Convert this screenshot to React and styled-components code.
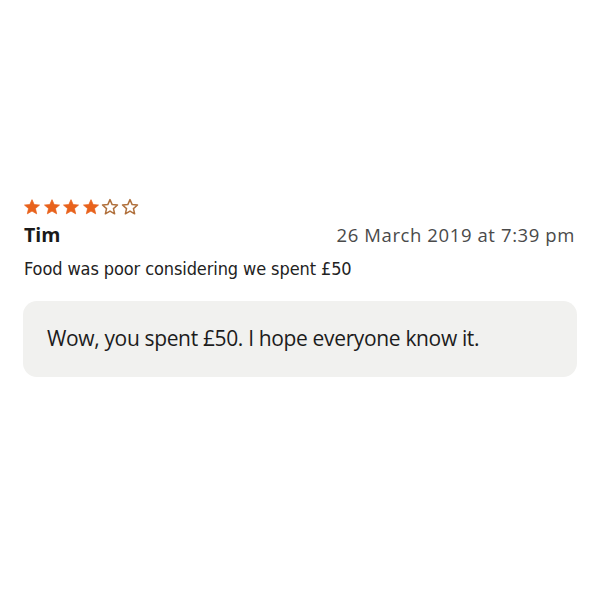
import styled, { createGlobalStyle } from 'styled-components';

const GlobalStyle = createGlobalStyle`
    body {
        margin: 0;
        background: #ffffff;
        font-family: "Open Sans", "Noto Sans", sans-serif;
        color: #222222;
    }
`;

function Star({ filled }) {
    return (
        <svg width="18" height="18" viewBox="0 0 24 24">
            <path
                d="M12 2.2l2.9 6.6 7.1.6-5.4 4.7 1.6 7-6.2-3.7-6.2 3.7 1.6-7L2 9.4l7.1-.6z"
                fill={filled ? '#e8621c' : '#ffffff'}
                stroke={filled ? '#e8621c' : '#b0703c'}
                strokeWidth={filled ? 1 : 2}
                strokeLinejoin="round"
            />
        </svg>
    );
}

function App() {
    const rating = 4;
    return (
        <Page>
            <GlobalStyle />
            <Review>
                <Stars>
                    {[0, 1, 2, 3, 4, 5].map((i) => (
                        <Star key={i} filled={i < rating} />
                    ))}
                </Stars>
                <Header>
                    <Name>Tim</Name>
                    <DateText>26 March 2019 at 7:39 pm</DateText>
                </Header>
                <Body>Food was poor considering we spent £50</Body>
                <Reply>Wow, you spent £50. I hope everyone know it.</Reply>
            </Review>
        </Page>
    );
}

const Page = styled.div`
    width: 599px;
    height: 599px;
    box-sizing: border-box;
    padding: 198px 22px 0 23px;
`;

const Review = styled.div`
    display: flex;
    flex-direction: column;
`;

const Stars = styled.div`
    display: flex;
    gap: 1.5px;
    height: 18px;
`;

const Header = styled.div`
    display: flex;
    justify-content: space-between;
    align-items: baseline;
    margin-top: 7px;
    line-height: 24px;
`;

const Name = styled.span`
    font-weight: 700;
    font-size: 19.5px;
    color: #1a1a1a;
    padding-left: 1px;
`;

const DateText = styled.span`
    font-size: 18.5px;
    letter-spacing: 0.6px;
    color: #4a4a4a;
    padding-right: 2px;
`;

const Body = styled.p`
    margin: 10px 0 0 1px;
    font-family: "DejaVu Sans Condensed", "Open Sans", sans-serif;
    font-size: 18px;
    letter-spacing: -0.1px;
    line-height: 24px;
    color: #222222;
`;

const Reply = styled.div`
    margin-top: 20px;
    background: #f1f1ef;
    border-radius: 14px;
    padding: 25px 24px 27px;
    font-size: 21px;
    letter-spacing: -0.35px;
    line-height: 24px;
    color: #1c1c1c;
`;

export default App;
